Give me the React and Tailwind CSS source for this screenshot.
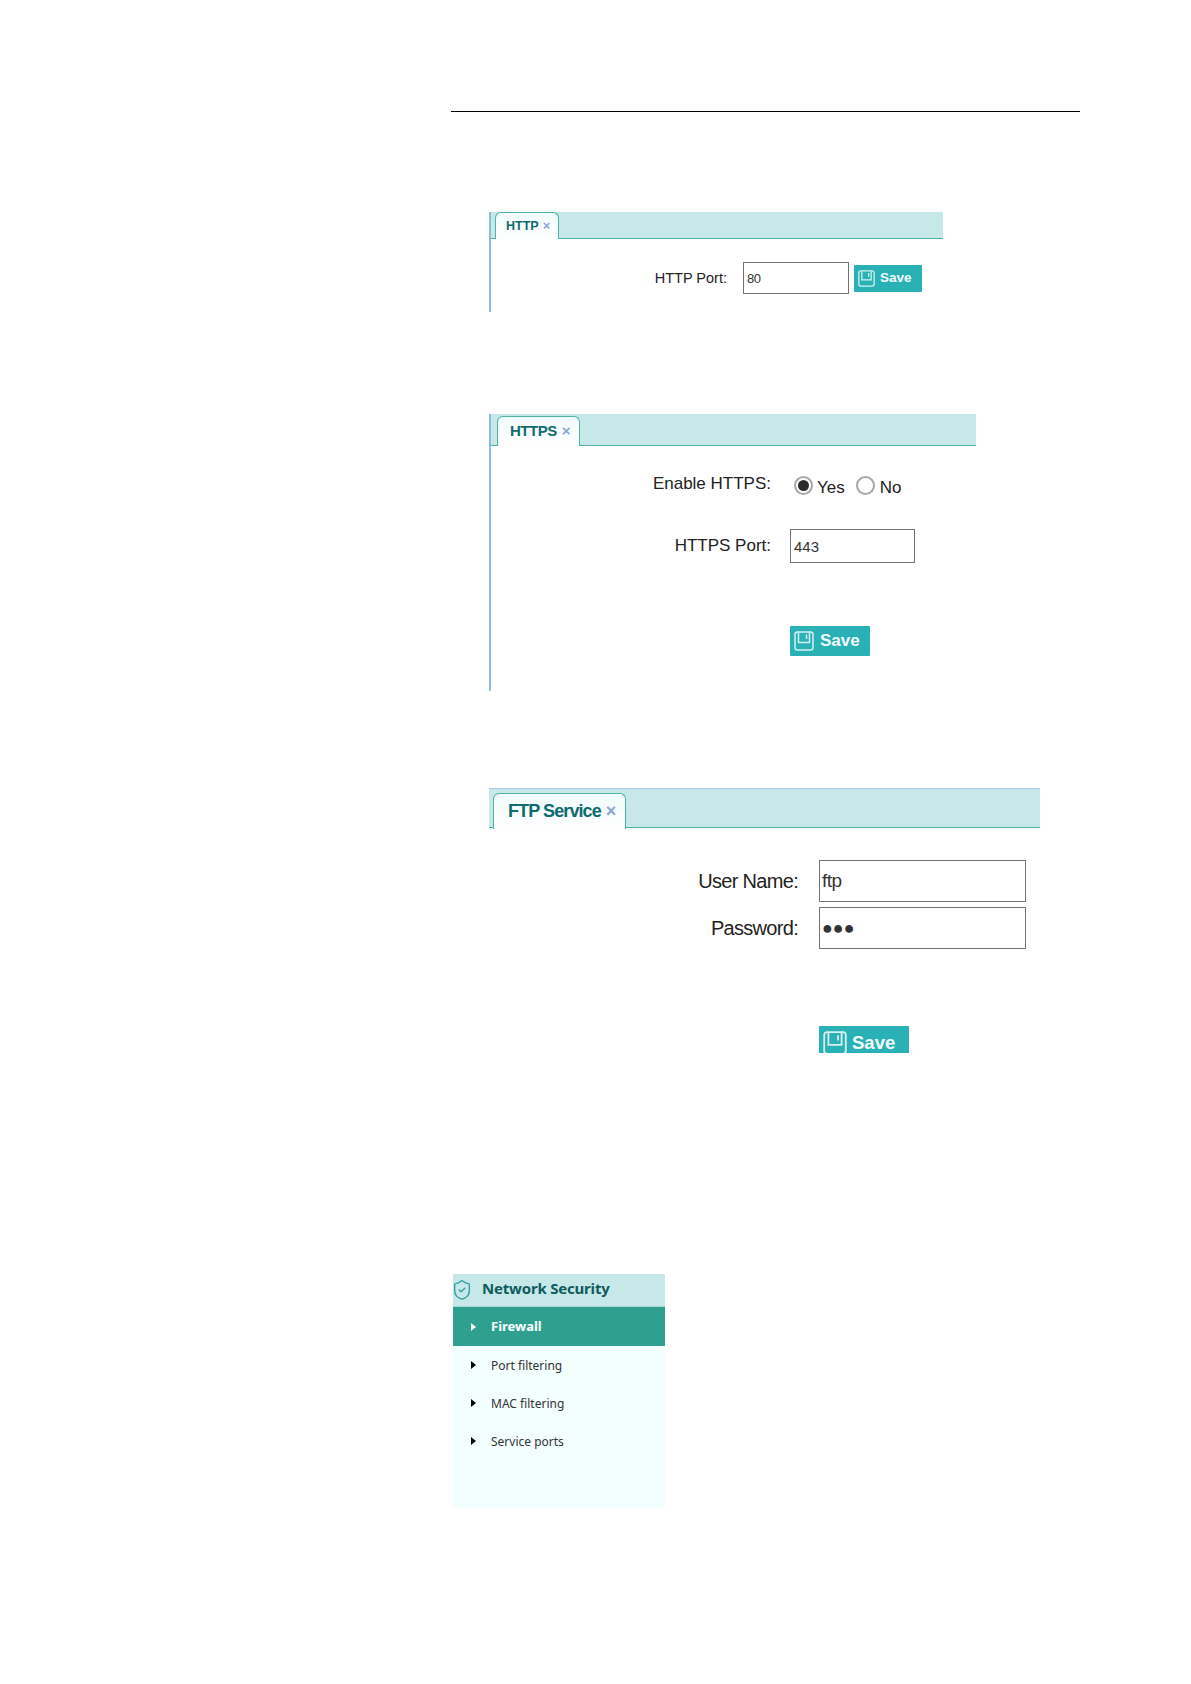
import React from 'react';
import { ShieldCheck } from 'lucide-react';

const SaveIcon = ({ className }) => (
  <svg viewBox="0 0 20 20" fill="none" stroke="#d5f1f1" strokeWidth="1.5" className={className}>
    <rect x="1" y="1" width="18" height="18" rx="2.5" />
    <path d="M4.5 1.5V11.5H15.5V1.5" />
    <path d="M12.5 3.5V8" />
  </svg>
);

const SaveButton = ({ className, iconClass }) => (
  <button className={`flex items-center bg-[#29b1b5] text-[#f4fbfb] font-bold rounded-[1px] shrink-0 ${className}`}>
    <SaveIcon className={iconClass} />
    <span>Save</span>
  </button>
);

const Tab = ({ label, className, closeClass }) => (
  <div className={`flex items-center bg-gradient-to-b from-[#f1fbfb] to-white border border-b-0 border-[#4fb3a5] rounded-t-[6px] -mb-px text-[#0f6b6d] font-bold ${className}`}>
    <span>{label}</span>
    <span className={`text-[#8ba6d6] font-bold ${closeClass}`}>×</span>
  </div>
);

const TextBox = ({ value, className }) => (
  <input
    readOnly
    type="text"
    value={value}
    className={`block border border-[#747474] bg-white text-[#333] outline-none shrink-0 ${className}`}
  />
);

const Radio = ({ checked }) => (
  <span className="flex items-center justify-center w-[19px] h-[19px] rounded-full border-2 border-[#a8a8a8] bg-white shrink-0">
    {checked && <span className="block w-[11px] h-[11px] rounded-full bg-[#2b2b2b]" />}
  </span>
);

const menuItems = ['Port filtering', 'MAC filtering', 'Service ports'];

const App = () => {
  return (
    <div className="w-[1191px] h-[1684px] bg-white overflow-hidden font-['Liberation_Sans',Arial,sans-serif] text-[#222]">
      <div className="ml-[451px] mt-[111px] w-[629px] h-px bg-black" />

      {/* HTTP */}
      <section className="ml-[489px] mt-[100px] w-[454px] h-[100px] border-l-2 border-[#8bbdd3]">
        <div className="flex h-[27px] bg-[#c6e8e8] border-b border-[#4fb3a5] pl-[4px]">
          <Tab label="HTTP" className="w-[64px] h-[27px] pl-[10px] text-[12.5px]" closeClass="ml-[4px] text-[13px]" />
        </div>
        <div className="flex items-center mt-[23px]">
          <label className="w-[236px] mt-[1px] text-right text-[14.5px]">HTTP Port:</label>
          <TextBox value="80" className="ml-[16px] w-[106px] h-[32px] pl-[3px] text-[13px] tracking-[-0.5px]" />
          <SaveButton className="ml-[5px] w-[68px] h-[27px] pl-[4px] gap-[5px] text-[13.5px]" iconClass="w-[17px] h-[17px]" />
        </div>
      </section>

      {/* HTTPS */}
      <section className="ml-[489px] mt-[102px] w-[487px] h-[277px] border-l-2 border-[#8bbdd3]">
        <div className="flex h-[32px] bg-[#c6e8e8] border-b border-[#4fb3a5] pl-[6px] pt-[2px]">
          <Tab label="HTTPS" className="w-[83px] h-[30px] pl-[12px] text-[15px] tracking-[-0.5px]" closeClass="ml-[5px] text-[15px]" />
        </div>
        <div className="flex items-center mt-[26px] h-[24px]">
          <label className="w-[280px] text-right text-[17px]">Enable HTTPS:</label>
          <div className="flex items-center ml-[23px] mt-[2px]">
            <Radio checked />
            <span className="ml-[4px] mt-[6px] text-[17px]">Yes</span>
            <span className="ml-[11px]"><Radio /></span>
            <span className="ml-[5px] mt-[6px] text-[17px]">No</span>
          </div>
        </div>
        <div className="flex items-center mt-[33px]">
          <label className="w-[280px] text-right text-[17px]">HTTPS Port:</label>
          <TextBox value="443" className="ml-[19px] w-[125px] h-[34px] pl-[3px] text-[15px]" />
        </div>
        <SaveButton className="ml-[299px] mt-[63px] w-[80px] h-[30px] pl-[4px] gap-[6px] text-[17px]" iconClass="w-[20px] h-[20px]" />
      </section>

      {/* FTP */}
      <section className="ml-[489px] mt-[97px] w-[551px]">
        <div className="flex h-[40px] bg-[#c6e8e8] border-t border-t-[#a9c9ea] border-b border-[#4fb3a5] pl-[4px] pt-[4px]">
          <Tab label="FTP Service" className="w-[133px] h-[36px] pl-[14px] text-[18px] tracking-[-0.9px]" closeClass="ml-[5px] text-[18px]" />
        </div>
        <div className="flex items-center mt-[32px]">
          <label className="w-[309px] text-right text-[20px] tracking-[-0.7px]">User Name:</label>
          <TextBox value="ftp" className="ml-[21px] w-[207px] h-[42px] pl-[2px] text-[19px] tracking-[-0.5px]" />
        </div>
        <div className="flex items-center mt-[5px]">
          <label className="w-[309px] text-right text-[20px] tracking-[-0.7px]">Password:</label>
          <TextBox value="●●●" className="ml-[21px] w-[207px] h-[42px] pl-[2px] text-[18px]" />
        </div>
        <div className="ml-[330px] mt-[77px] w-[90px] h-[27px] overflow-hidden">
          <SaveButton className="w-[90px] h-[34px] pl-[4px] gap-[5px] text-[18.5px]" iconClass="w-[24px] h-[24px] self-start mt-[5px]" />
        </div>
      </section>

      {/* menu */}
      <nav className="ml-[453px] mt-[221px] w-[212px] h-[234px] bg-[#f3ffff] font-['Noto_Sans',sans-serif]">
        <div className="flex items-center h-[33px] bg-[#c6e8e8] border-b border-[#a9d5d2]">
          <ShieldCheck size={22} strokeWidth={1.5} className="text-[#2f9f9f] shrink-0 -ml-[2px]" />
          <span className="ml-[9px] mb-[3px] text-[15px] font-bold text-[#0f5c5e] tracking-[-0.2px]">Network Security</span>
        </div>
        <div className="flex items-center h-[39px] bg-[#2f9f90] text-white text-[13px] font-bold pl-[18px]">
          <span className="w-0 h-0 border-y-[4px] border-y-transparent border-l-[5px] border-l-white" />
          <span className="ml-[15px]">Firewall</span>
        </div>
        {menuItems.map((item) => (
          <div key={item} className="flex items-center h-[38px] text-[12px] text-[#333] pl-[18px]">
            <span className="w-0 h-0 border-y-[4px] border-y-transparent border-l-[5px] border-l-black" />
            <span className="ml-[15px] mt-[2px]">{item}</span>
          </div>
        ))}
      </nav>
    </div>
  );
};

export default App;
